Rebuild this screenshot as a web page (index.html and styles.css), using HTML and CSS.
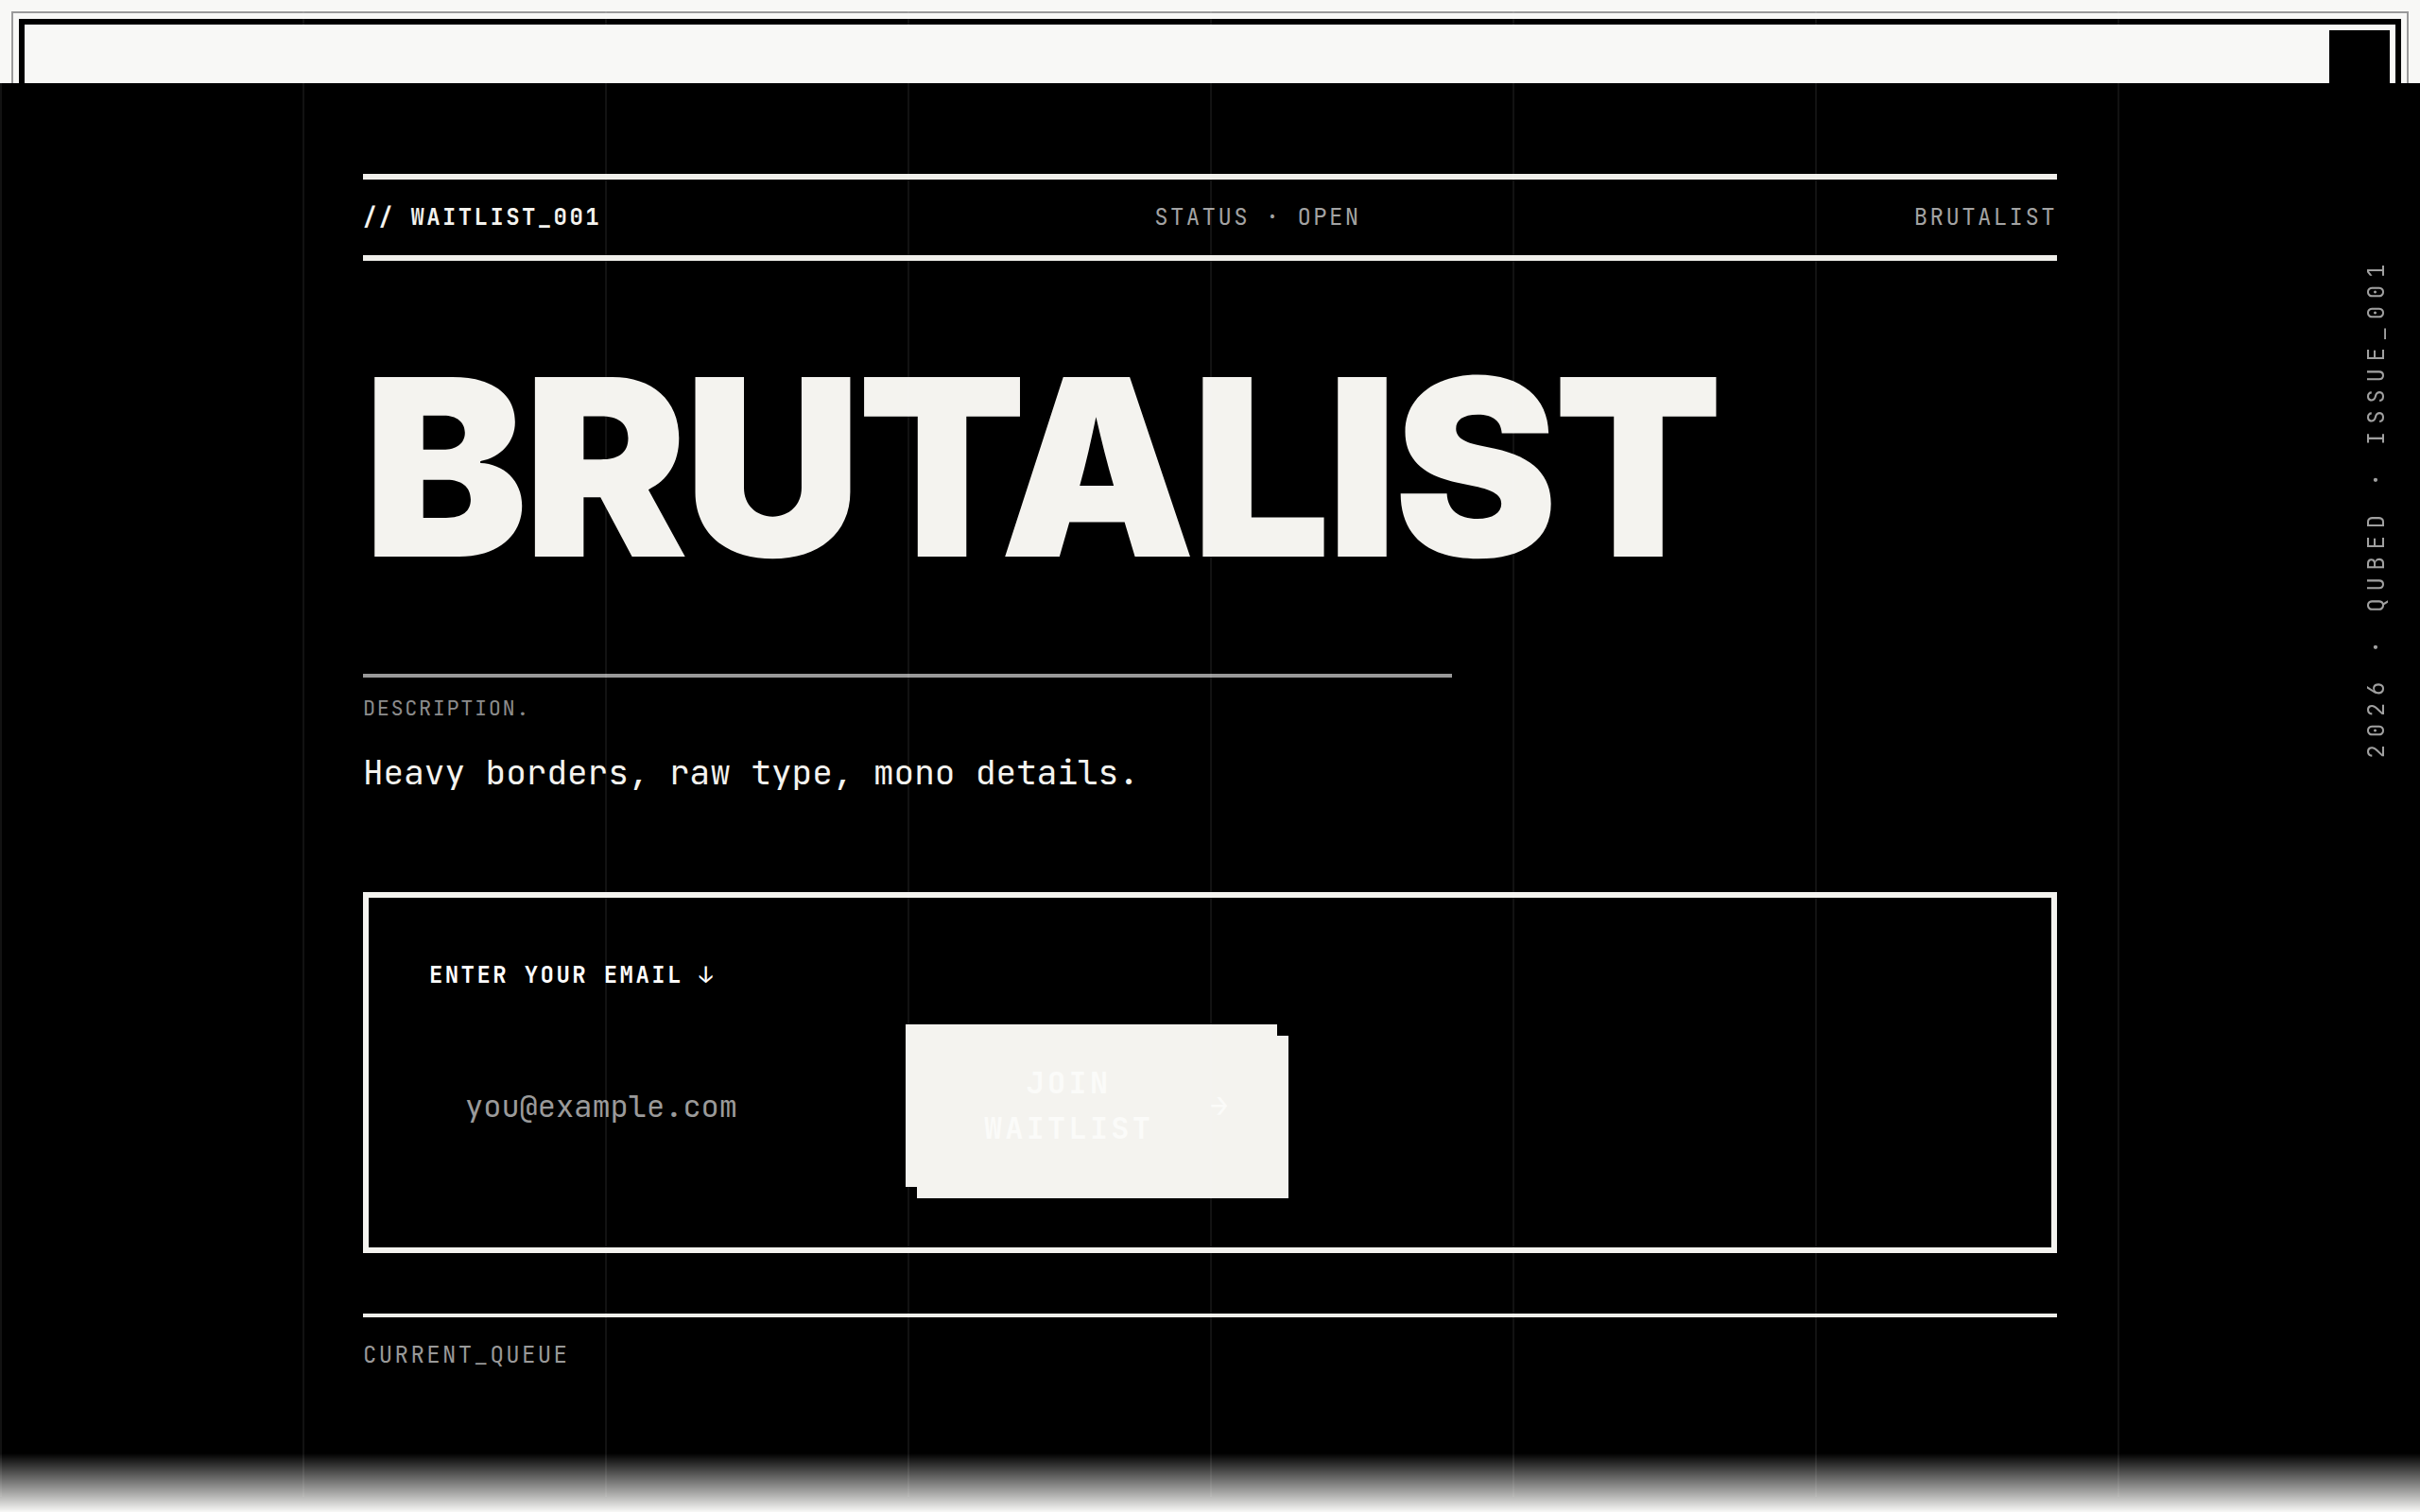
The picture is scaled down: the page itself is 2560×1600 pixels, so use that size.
FILE: index.html
```html
<!DOCTYPE html>
<html lang="en">
<head>
<meta charset="utf-8">
<title>BRUTALIST — Waitlist</title>
<link rel="stylesheet" href="styles.css">
</head>
<body>
<div class="frame-outer"></div>
<div class="frame-inner"></div>
<div class="frame-corner"></div>

<main class="page">
  <div class="wrap">
    <header class="topbar">
      <span class="tb-left">// WAITLIST_001</span>
      <span class="tb-mid">STATUS · OPEN</span>
      <span class="tb-right">BRUTALIST</span>
    </header>

    <h1 class="title">BRUTALIST</h1>

    <section class="desc">
      <div class="desc-label">DESCRIPTION.</div>
      <p class="desc-text">Heavy borders, raw type, mono details.</p>
    </section>

    <form class="signup">
      <label class="signup-label" for="email">ENTER YOUR EMAIL ↓</label>
      <div class="signup-row">
        <input id="email" class="signup-input" type="email" placeholder="you@example.com">
        <button class="signup-btn" type="button"><span class="btn-label">Join Waitlist</span><span class="btn-arrow">→</span></button>
      </div>
    </form>

    <section class="queue">
      <div class="queue-label">CURRENT_QUEUE</div>
    </section>
  </div>
</main>

<div class="grid-overlay"></div>
<div class="fade"></div>
<div class="side">2026 · QUBED · ISSUE_001</div>
</body>
</html>
```

FILE: styles.css
```css
html, body {
  margin: 0;
  padding: 0;
}

body {
  background: #f8f8f6;
  overflow: hidden;
  font-family: "JetBrains Mono", "DejaVu Sans Mono", monospace;
  color: #f4f3ef;
}

.frame-outer {
  position: fixed;
  top: 12px;
  left: 12px;
  right: 12px;
  bottom: 12px;
  border: 2px solid #9a9a9a;
  z-index: 0;
}

.frame-inner {
  position: fixed;
  top: 20px;
  left: 20px;
  right: 20px;
  bottom: 20px;
  border: 6px solid #000;
  z-index: 0;
}

.frame-corner {
  position: fixed;
  top: 32px;
  right: 32px;
  width: 64px;
  height: 64px;
  background: #000;
  z-index: 0;
}

.page {
  position: relative;
  z-index: 1;
  margin-top: 88px;
  min-height: calc(100vh - 88px);
  background: #000;
  padding-top: 96px;
  box-sizing: border-box;
}

.wrap {
  width: 1792px;
  margin: 0 auto;
}

.topbar {
  display: flex;
  justify-content: space-between;
  align-items: center;
  border-top: 6px solid #f0efeb;
  border-bottom: 6px solid #f0efeb;
  padding: 22px 0;
  font-size: 24px;
  line-height: 36px;
  letter-spacing: 0.1em;
  color: #a3a3a3;
}

.tb-left {
  color: #f4f3ef;
  font-weight: 700;
}

.title {
  margin: 88px 0 88px;
  font-family: "Inter", "Liberation Sans", sans-serif;
  font-weight: 900;
  font-size: 261px;
  line-height: 1;
  letter-spacing: -0.018em;
  color: #f4f3ef;
}

.desc {
  width: 1152px;
  border-top: 4px solid #999;
  padding-top: 16px;
}

.desc-label {
  font-size: 22px;
  line-height: 33px;
  letter-spacing: 0.07em;
  color: #8c8c8c;
}

.desc-text {
  margin: 24px 0 0;
  font-size: 36px;
  line-height: 54px;
  color: #f4f3ef;
}

.signup {
  margin-top: 100px;
  border: 6px solid #f4f3ef;
  padding: 64px;
}

.signup-label {
  display: block;
  margin-bottom: 34px;
  font-size: 24px;
  line-height: 36px;
  font-weight: 700;
  letter-spacing: 0.1em;
  color: #ffffff;
}

.signup-row {
  display: flex;
  align-items: center;
  gap: 32px;
}

.signup-input {
  width: 472px;
  height: 100px;
  box-sizing: border-box;
  padding: 0 38px;
  background: transparent;
  border: 0;
  outline: none;
  font-family: "JetBrains Mono", "DejaVu Sans Mono", monospace;
  font-size: 32px;
  color: #f4f3ef;
}

.signup-input::placeholder {
  color: #9a9a9a;
}

.signup-btn {
  display: flex;
  align-items: center;
  width: 393px;
  height: 172px;
  box-sizing: border-box;
  padding: 0 0 0 82px;
  background: #f4f3ef;
  border: 0;
  box-shadow: 12px 12px 0 #f4f3ef;
  color: #fbfbf9;
  font-family: "JetBrains Mono", "DejaVu Sans Mono", monospace;
  font-weight: 700;
  font-size: 32px;
  line-height: 48px;
  letter-spacing: 0.1em;
  text-transform: uppercase;
  cursor: pointer;
}

.btn-label {
  display: block;
  width: 181px;
  text-align: center;
}

.btn-arrow {
  margin-left: 59px;
}

.queue {
  margin-top: 64px;
  border-top: 4px solid #f0efeb;
  padding-top: 22px;
}

.queue-label {
  font-size: 24px;
  line-height: 36px;
  letter-spacing: 0.1em;
  color: #999;
}

.grid-overlay {
  position: fixed;
  top: 0;
  left: 0;
  right: 0;
  bottom: 16px;
  pointer-events: none;
  z-index: 5;
  background-image: linear-gradient(to right, rgba(255, 255, 255, 0.07) 0 2px, transparent 2px);
  background-size: 320px 100%;
}

.fade {
  position: fixed;
  left: 0;
  right: 0;
  bottom: 0;
  height: 62px;
  pointer-events: none;
  z-index: 4;
  background: linear-gradient(to bottom, rgba(248, 248, 246, 0), #f8f8f6);
}

.side {
  position: fixed;
  top: 272px;
  right: 34px;
  z-index: 6;
  writing-mode: vertical-rl;
  transform: rotate(180deg);
  font-size: 24px;
  line-height: 24px;
  letter-spacing: 7.7px;
  color: #a0a0a0;
  white-space: nowrap;
}
```
